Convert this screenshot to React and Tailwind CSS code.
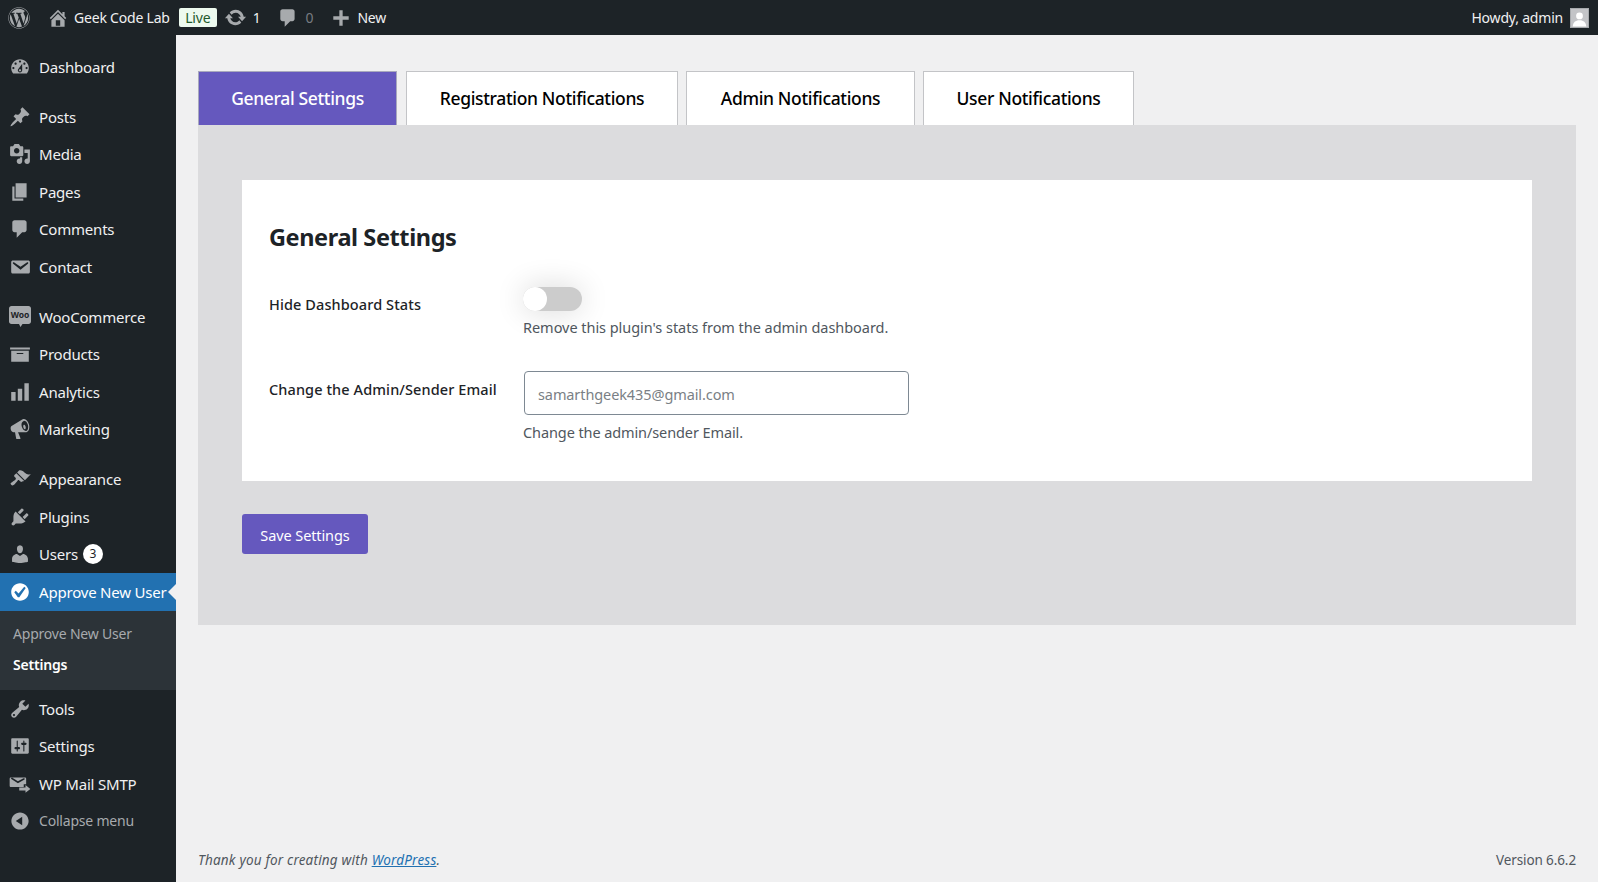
import { FaWordpress } from 'react-icons/fa'

const FONT = 'font-["Noto_Sans","Open_Sans",sans-serif]'

const PATHS = {
  dashboard: 'M3.76 16h12.48c1.1-1.37 1.76-3.11 1.76-5 0-4.42-3.58-8-8-8s-8 3.58-8 8c0 1.89.66 3.63 1.76 5zM10 4c.55 0 1 .45 1 1s-.45 1-1 1-1-.45-1-1 .45-1 1-1zM6 6c.55 0 1 .45 1 1s-.45 1-1 1-1-.45-1-1 .45-1 1-1zm8 0c.55 0 1 .45 1 1s-.45 1-1 1-1-.45-1-1 .45-1 1-1zm-5.37 5.55L12 7v6c0 1.1-.9 2-2 2s-2-.9-2-2c0-.57.24-1.08.63-1.45zM4 10c.55 0 1 .45 1 1s-.45 1-1 1-1-.45-1-1 .45-1 1-1zm12 0c.55 0 1 .45 1 1s-.45 1-1 1-1-.45-1-1 .45-1 1-1zm-5 3c0-.55-.45-1-1-1s-1 .45-1 1 .45 1 1 1 1-.45 1-1z',
  post: 'M10.44 3.02l1.82-1.82 6.36 6.35-1.83 1.82c-1.05-.68-2.48-.57-3.41.36l-.75.75c-.92.93-1.04 2.35-.35 3.41l-1.83 1.82-2.41-2.41-2.8 2.79c-.42.42-3.38 2.71-3.8 2.29s1.86-3.39 2.28-3.81l2.79-2.79L4.1 9.36l1.83-1.82c1.05.69 2.48.57 3.4-.36l.75-.75c.93-.92 1.05-2.35.36-3.41z',
  media: 'M13 11V4c0-.55-.45-1-1-1h-1.67L9 1H5L3.67 3H2c-.55 0-1 .45-1 1v7c0 .55.45 1 1 1h10c.55 0 1-.45 1-1zM7 4.5c1.38 0 2.5 1.12 2.5 2.5S8.38 9.5 7 9.5 4.5 8.38 4.5 7 5.62 4.5 7 4.5zM14 6h5v10.5c0 1.38-1.12 2.5-2.5 2.5S14 17.88 14 16.5s1.12-2.5 2.5-2.5c.17 0 .34.02.5.05V9h-3V6zm-4 8.05V13h2v3.5c0 1.38-1.12 2.5-2.5 2.5S7 17.88 7 16.5 8.12 14 9.5 14c.17 0 .34.02.5.05z',
  page: 'M6 15V2h10v13H6zm-1 1h8v2H3V5h2v11z',
  comment: 'M5 2h9c1.1 0 2 .9 2 2v7c0 1.1-.9 2-2 2h-2l-5 5v-5H5c-1.1 0-2-.9-2-2V4c0-1.1.9-2 2-2z',
  email: 'M3.87 4h13.25C18.37 4 19 4.59 19 5.79v8.42c0 1.19-.63 1.79-1.88 1.79H3.87c-1.25 0-1.88-.6-1.88-1.79V5.79c0-1.2.63-1.79 1.88-1.79zm6.62 8.6l6.74-5.53c.24-.2.43-.66.13-1.07-.29-.41-.82-.42-1.17-.17l-5.7 3.86L4.8 5.83c-.35-.25-.88-.24-1.17.17-.3.41-.11.87.13 1.07z',
  home: 'M16 8.5l1.53 1.53-1.06 1.06L10 4.62l-6.47 6.47-1.06-1.06L10 2.5l4 4v-2h2v4zm-6-2.46l6 5.99V18H4v-5.97zM12 17v-5H8v5h4z',
  update: 'M10.2 3.28c3.53 0 6.43 2.61 6.92 6h2.08l-3.5 4-3.5-4h2.32c-.45-1.97-2.21-3.45-4.32-3.45-1.45 0-2.73.71-3.54 1.78L4.95 5.66C6.23 4.2 8.11 3.28 10.2 3.28zm-.4 13.44c-3.52 0-6.43-2.61-6.92-6H.8l3.5-4c1.17 1.33 2.33 2.67 3.5 4H5.48c.45 1.97 2.21 3.45 4.32 3.45 1.45 0 2.73-.71 3.54-1.78l1.71 1.95c-1.28 1.46-3.15 2.38-5.25 2.38z',
  plus: 'M17 8.5v3h-5.5V17h-3v-5.5H3v-3h5.5V3h3v5.5z',
  archive: 'M19 4v2H1V4h18zM2 7h16v10H2V7zm11 3V9H7v1h6z',
  chart: 'M18 18V2h-4v16h4zm-6 0V7H8v11h4zm-6 0v-8H2v8h4z',
  megaphone: 'M18.15 5.94c.46 1.62.38 3.22-.02 4.48-.42 1.28-1.26 2.18-2.3 2.48-.16.06-.26.06-.4.06-.06.02-.12.02-.18.02-.06.02-.14.02-.22.02h-6.8l2.22 5.5c.02.14-.06.26-.14.34-.08.1-.24.16-.34.16H6.95c-.1 0-.26-.06-.34-.16-.08-.08-.16-.2-.14-.34l-1-5.5H4.25l-.02-.02c-.5.06-1.08-.18-1.54-.62s-.88-1.08-1.06-1.88c-.24-.8-.2-1.56-.02-2.2.18-.62.58-1.08 1.06-1.3l.02-.02 9-5.4c.1-.06.18-.1.24-.16.06-.04.14-.08.24-.12.16-.08.28-.12.5-.18 1.04-.3 2.24.1 3.22.98s1.76 2.18 2.26 3.86zm-2.58 5.98h-.02c.4-.1.74-.34 1.04-.7.58-.7.86-1.76.86-3.04-.02-.64-.1-1.3-.3-1.98-.2-.72-.5-1.34-.84-1.88s-.76-1-1.22-1.3c-.46-.28-.92-.44-1.36-.44-.12 0-.24.02-.36.04-.78.22-1.36.84-1.7 1.78-.34.92-.4 2.12-.06 3.4.32 1.16.86 2.22 1.56 2.9.72.7 1.58 1.16 2.4 1.02zm-1.22-1.8c.6 0 .88-.58.88-1.36 0-.56-.16-1.16-.44-1.68-.26-.52-.66-.9-1-.9-.58 0-.86.58-.86 1.36 0 .56.16 1.16.42 1.68.28.52.66.9 1 .9z',
  appearance: 'M14.48 11.06L7.41 3.99l1.5-1.5c.5-.56 2.3-.47 3.51.32 1.21.8 1.43 1.28 2.91 2.1 1.18.64 2.45 1.26 4.45.85zm-.71.71L6.7 4.7 4.93 6.47c-.39.39-.39 1.02 0 1.41l1.06 1.06c.39.39.39 1.03 0 1.42-.6.6-1.43 1.11-2.21 1.69-.35.26-.7.53-1.01.84C1.43 13.23.99 14.29 2 15.3c1 1 2.06.56 3.41-.78.3-.31.58-.66.84-1.01.58-.78 1.09-1.61 1.69-2.21.39-.39 1.02-.39 1.41 0l1.06 1.06c.39.39 1.03.39 1.42 0z',
  plugin: 'M13.11 4.36L9.87 7.6 8 5.73l3.24-3.24c.35-.34 1.05-.2 1.56.32.52.51.66 1.21.31 1.55zm-8 1.77l.91-1.12 9.01 9.01-1.19.84c-.71.71-2.63 1.16-3.82 1.16H6.14L4.9 17.26c-.59.59-1.54.59-2.12 0-.59-.58-.59-1.53 0-2.12l1.24-1.24v-3.88c0-1.13.4-3.19 1.09-3.89zm7.26 3.97l3.24-3.24c.34-.35 1.04-.21 1.55.31.52.51.66 1.21.31 1.55l-3.24 3.25z',
  users: 'M10 9.25c-2.27 0-2.73-3.44-2.73-3.44C7 4.02 7.82 2 9.97 2c2.16 0 2.98 2.02 2.71 3.81 0 0-.41 3.44-2.68 3.44zm0 2.57L12.72 10c2.39 0 4.52 2.33 4.52 4.53v2.49s-3.65 1.13-7.24 1.13c-3.65 0-7.24-1.13-7.24-1.13v-2.49c0-2.25 1.94-4.48 4.47-4.48z',
  tools: 'M16.68 9.77c-1.34 1.34-3.3 1.67-4.95.99l-5.41 6.52c-.99.99-2.59.99-3.58 0s-.99-2.59 0-3.57l6.52-5.42c-.68-1.65-.35-3.61.99-4.95 1.28-1.28 3.12-1.62 4.72-1.06l-2.89 2.89 2.82 2.82 2.86-2.87c.53 1.58.18 3.39-1.08 4.65zM3.81 16.21c.4.39 1.04.39 1.43 0 .4-.4.4-1.04 0-1.43-.39-.4-1.03-.4-1.43 0-.39.39-.39 1.03 0 1.43z',
  settings: 'M18 16V4c0-.55-.45-1-1-1H3c-.55 0-1 .45-1 1v12c0 .55.45 1 1 1h14c.55 0 1-.45 1-1zM8 11h1c.55 0 1 .45 1 1s-.45 1-1 1H8v1.5c0 .28-.22.5-.5.5s-.5-.22-.5-.5V13H6c-.55 0-1-.45-1-1s.45-1 1-1h1V5.5c0-.28.22-.5.5-.5s.5.22.5.5V11zm5-2h-1c-.55 0-1-.45-1-1s.45-1 1-1h1V5.5c0-.28.22-.5.5-.5s.5.22.5.5V7h1c.55 0 1 .45 1 1s-.45 1-1 1h-1v5.5c0 .28-.22.5-.5.5s-.5-.22-.5-.5V9z',
  collapse: 'M10 2.16c4.33 0 7.84 3.51 7.84 7.84s-3.51 7.84-7.84 7.84S2.16 14.33 2.16 10 5.71 2.16 10 2.16zm2 11.72V6.12L6.18 9.97z',
  check: 'M10 2c-4.42 0-8 3.58-8 8s3.58 8 8 8 8-3.58 8-8-3.58-8-8-8zm-.615 12.66h-1.34l-3.24-4.54 1.34-1.25 2.57 2.4 5.14-5.93 1.34.94-5.81 8.38z',
  // envelope + arrow, hand drawn for WP Mail SMTP
  smtp: 'M1.8 4h12.6c.8 0 1.2.4 1.2 1.2v5.100h-2.200v2.400H1.800C1 12.700.6 12.300.6 11.500V5.200C.6 4.400 1 4 1.800 4zm6.300 5.400l6-3.600c.5-.4.3-1.100-.4-1.100-.2 0-.3 0-.5.1L8.100 7.500 3 4.400c-.2-.1-.3-.1-.5-.1-.7 0-.9.7-.4 1.100zM15 11l4.400 3.500L15 18v-2.200H9.300v-2.600H15z',
}

function Icon({ name, className }) {
  return (
    <svg viewBox="0 0 20 20" fill="currentColor" className={className}>
      <path d={PATHS[name]} />
    </svg>
  )
}

function WooIcon() {
  return (
    <svg viewBox="0 0 22 22" className="w-[22px] h-[22px] text-[#a7aaad]">
      <path fill="currentColor" d="M2.5 0h17C20.900 0 22 1.100 22 2.500v13c0 1.400-1.100 2.500-2.500 2.500H13.500L11.500 21l-1.500-3H2.500C1.100 18 0 16.900 0 15.500v-13C0 1.100 1.100 0 2.500 0z" />
      <text x="11" y="12" textAnchor="middle" fontSize="8.500" fontWeight="700" fill="#1d2327" fontFamily="Noto Sans, sans-serif">Woo</text>
    </svg>
  )
}

function MenuItem({ icon, label, badge, active, muted, spaced }) {
  return (
    <div className={`relative flex items-center h-[37.5px] ${spaced ? 'mt-[12.5px]' : ''} ${active ? 'bg-[#2271b1] text-white' : ''} ${muted ? 'text-[#a7aaad]' : 'text-[#f0f0f1]'}`}>
      <span className={`w-[39px] flex justify-center ${active ? 'text-white' : 'text-[#a7aaad]'}`}>
        {icon === 'woo' ? <WooIcon /> : <Icon name={icon} className="w-[22px] h-[22px]" />}
      </span>
      <span className={`leading-5 whitespace-nowrap ${muted ? 'text-[14px]' : 'text-[15px]'} tracking-[-0.2px]`}>{label}</span>
      {badge && (
        <span className="ml-[5px] w-[20px] h-[20px] rounded-full bg-white text-[#1d2327] text-[12px] flex items-center justify-center">{badge}</span>
      )}
      {active && (
        <span className="absolute right-0 top-1/2 -translate-y-1/2 w-0 h-0 border-y-[8px] border-y-transparent border-r-[8px] border-r-[#f0f0f1]" />
      )}
    </div>
  )
}

function Sidebar() {
  return (
    <aside className="w-[176px] shrink-0 bg-[#1d2327] pt-[13px]">
      <MenuItem icon="dashboard" label="Dashboard" />
      <MenuItem icon="post" label="Posts" spaced />
      <MenuItem icon="media" label="Media" />
      <MenuItem icon="page" label="Pages" />
      <MenuItem icon="comment" label="Comments" />
      <MenuItem icon="email" label="Contact" />
      <MenuItem icon="woo" label="WooCommerce" spaced />
      <MenuItem icon="archive" label="Products" />
      <MenuItem icon="chart" label="Analytics" />
      <MenuItem icon="megaphone" label="Marketing" />
      <MenuItem icon="appearance" label="Appearance" spaced />
      <MenuItem icon="plugin" label="Plugins" />
      <MenuItem icon="users" label="Users" badge="3" />
      <MenuItem icon="check" label="Approve New User" active />
      <div className="bg-[#2c3338] h-[79.5px] pt-[7px] pl-[13px] text-[14px] tracking-[-0.2px]">
        <div className="h-[31px] leading-[31px] text-[#a7aaad]">Approve New User</div>
        <div className="h-[31px] leading-[31px] text-white font-semibold">Settings</div>
      </div>
      <MenuItem icon="tools" label="Tools" />
      <MenuItem icon="settings" label="Settings" />
      <MenuItem icon="smtp" label="WP Mail SMTP" />
      <MenuItem icon="collapse" label="Collapse menu" muted />
    </aside>
  )
}

function TopBar() {
  return (
    <header className="h-[35px] shrink-0 bg-[#1d2327] flex items-center text-[14px] text-[#f0f0f1] tracking-[-0.2px]">
      <FaWordpress className="ml-[8px] w-[22px] h-[22px] text-[#a7aaad]" />
      <Icon name="home" className="ml-[17px] w-[22px] h-[22px] text-[#a7aaad]" />
      <span className="ml-[5px] whitespace-nowrap">Geek Code Lab</span>
      <span className="ml-[9px] w-[38px] h-[19px] rounded-[2px] bg-[#edfaef] text-[#1f5a2d] text-[14px] leading-[19px] text-center">Live</span>
      <Icon name="update" className="ml-[7px] w-[23px] h-[23px] text-[#a7aaad]" />
      <span className="ml-[6px]">1</span>
      <Icon name="comment" className="ml-[16px] w-[22px] h-[22px] text-[#a7aaad]" />
      <span className="ml-[7px] text-[#787c82]">0</span>
      <Icon name="plus" className="ml-[17px] w-[22px] h-[22px] text-[#a7aaad]" />
      <span className="ml-[5px]">New</span>
      <span className="ml-auto whitespace-nowrap">Howdy, admin</span>
      <span className="ml-[7px] mr-[9px] w-[19px] h-[20px] bg-[#c3c4c7] border border-[#a7aaad] overflow-hidden flex">
        <svg viewBox="0 0 20 20" className="w-full h-full" fill="#fff">
          <circle cx="10" cy="7.500" r="4" />
          <path d="M2 20c.5-5 3-7.500 8-7.500s7.500 2.500 8 7.500z" />
        </svg>
      </span>
    </header>
  )
}

function Tab({ label, width, active }) {
  return (
    <div className={`h-[54px] border border-b-0 flex items-center justify-center text-[17.5px] font-medium tracking-[-0.35px] ${width} ${active ? 'bg-[#6558be] border-[#a9a9bd] text-white' : 'bg-white border-[#c3c4c7] text-black'}`}>
      {label}
    </div>
  )
}

function SettingsCard() {
  return (
    <section className="bg-white pt-[41px] pb-[39px] pl-[27px]">
      <h2 className="text-[23.5px] leading-8 font-bold text-[#1d2327] tracking-[-0.4px]">General Settings</h2>
      <div className="flex mt-[34px]">
        <div className="w-[254px] pt-[7px] text-[14.500px] leading-5 font-medium text-[#1d2327] tracking-[0.1px]">Hide Dashboard Stats</div>
        <div>
          <div className="relative w-[59px] h-[24px] rounded-full bg-[#ccc] shadow-[0_0_30px_rgba(0,0,0,0.16)]">
            <span className="absolute left-0 top-0 w-[24px] h-[24px] rounded-full bg-white" />
          </div>
          <p className="mt-[6px] text-[14.500px] leading-5 text-[#50575e] tracking-[-0.04px]">Remove this plugin's stats from the admin dashboard.</p>
        </div>
      </div>
      <div className="flex mt-[34px]">
        <div className="w-[254px] pt-[8px] text-[14.500px] leading-5 font-medium text-[#1d2327] tracking-[0.1px] whitespace-nowrap">Change the Admin/Sender Email</div>
        <div>
          <div className="w-[385px] h-[44px] ml-[1px] rounded-[4px] border border-[#7e8993] bg-white flex items-center pl-[13px] pt-[3px] text-[14.500px] text-[#7a7f85] tracking-[-0.1px]">samarthgeek435@gmail.com</div>
          <p className="mt-[7px] text-[14.500px] leading-5 text-[#50575e] tracking-[-0.1px]">Change the admin/sender Email.</p>
        </div>
      </div>
    </section>
  )
}

export default function App() {
  return (
    <div className={`h-screen flex flex-col overflow-hidden bg-[#f0f0f1] ${FONT}`}>
      <TopBar />
      <div className="flex flex-1 min-h-0">
        <Sidebar />
        <main className="flex-1 flex flex-col px-[22px] pt-[36px]">
          <div className="flex">
            <Tab label="General Settings" width="w-[199px]" active />
            <div className="flex gap-[8px] ml-[9px]">
              <Tab label="Registration Notifications" width="w-[272px]" />
              <Tab label="Admin Notifications" width="w-[229px]" />
              <Tab label="User Notifications" width="w-[211px]" />
            </div>
          </div>
          <div className="h-[500px] bg-[#dcdcde] pt-[55px] px-[44px]">
            <SettingsCard />
            <button className="mt-[33px] w-[126px] h-[40px] pt-[3px] rounded-[3px] bg-[#6558be] text-white text-[14.500px] tracking-[-0.1px]">Save Settings</button>
          </div>
          <footer className="mt-auto mb-[12px] flex justify-between text-[13.500px] leading-5 text-[#50575e]">
            <span className="italic tracking-[0.2px]">Thank you for creating with <span className="text-[#2271b1] underline">WordPress</span>.</span>
            <span className="tracking-[-0.1px]">Version 6.6.2</span>
          </footer>
        </main>
      </div>
    </div>
  )
}
